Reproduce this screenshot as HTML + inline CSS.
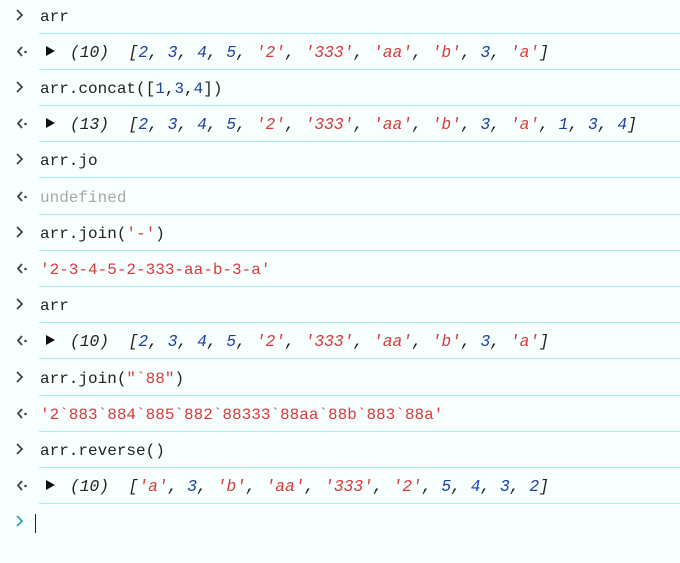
<!DOCTYPE html>
<html><head><meta charset="utf-8"><style>
html,body{margin:0;padding:0;background:#f8ffff;width:680px;height:563px;overflow:hidden}
.r{position:absolute;left:0;width:680px;height:36px}
.ln{position:absolute;left:39px;right:0;height:1px;background:#a6eef6}
.t{position:absolute;left:40px;top:2px;height:34px;font:16px "Liberation Mono","Noto Sans CJK SC",monospace;line-height:34px;color:#222;white-space:pre}
.i{font-style:italic;font-size:16.3px}
.n{color:#1c3fa8}.s{color:#d83a3a}.g{color:#a8a8a8}
.ic{position:absolute;left:13px;top:8px}
.tri{position:absolute;left:46px;top:12px;width:0;height:0;border-left:9px solid #111;border-top:5.5px solid transparent;border-bottom:5.5px solid transparent}
</style></head><body>
<div id="w"></div>
<script>
(function(){
var rows=[
['in','arr'],
['out','<span class="i">(10)  [<span class="n">2</span>, <span class="n">3</span>, <span class="n">4</span>, <span class="n">5</span>, <span class="s">\'2\'</span>, <span class="s">\'333\'</span>, <span class="s">\'aa\'</span>, <span class="s">\'b\'</span>, <span class="n">3</span>, <span class="s">\'a\'</span>]</span>',1],
['in','arr.concat([<span class="n">1</span>,<span class="n">3</span>,<span class="n">4</span>])'],
['out','<span class="i">(13)  [<span class="n">2</span>, <span class="n">3</span>, <span class="n">4</span>, <span class="n">5</span>, <span class="s">\'2\'</span>, <span class="s">\'333\'</span>, <span class="s">\'aa\'</span>, <span class="s">\'b\'</span>, <span class="n">3</span>, <span class="s">\'a\'</span>, <span class="n">1</span>, <span class="n">3</span>, <span class="n">4</span>]</span>',1],
['in','arr.jo'],
['out','<span class="g">undefined</span>'],
['in','arr.join(<span class="s">\'-\'</span>)'],
['out','<span class="s">\'2-3-4-5-2-333-aa-b-3-a\'</span>'],
['in','arr'],
['out','<span class="i">(10)  [<span class="n">2</span>, <span class="n">3</span>, <span class="n">4</span>, <span class="n">5</span>, <span class="s">\'2\'</span>, <span class="s">\'333\'</span>, <span class="s">\'aa\'</span>, <span class="s">\'b\'</span>, <span class="n">3</span>, <span class="s">\'a\'</span>]</span>',1],
['in','arr.join(<span class="s">"`88"</span>)'],
['out','<span class="s">\'2`883`884`885`882`88333`88aa`88b`883`88a\'</span>'],
['in','arr.reverse()'],
['out','<span class="i">(10)  [<span class="s">\'a\'</span>, <span class="n">3</span>, <span class="s">\'b\'</span>, <span class="s">\'aa\'</span>, <span class="s">\'333\'</span>, <span class="s">\'2\'</span>, <span class="n">5</span>, <span class="n">4</span>, <span class="n">3</span>, <span class="n">2</span>]</span>',1]
];
var h='';
rows.forEach(function(r,k){
 var y=Math.round(-2.5+36.2*k);
 var ic=r[0]=='in'
  ?'<svg class="ic" width="14" height="18" viewBox="0 0 14 18"><path d="M4 4 L9 9 L4 14" fill="none" stroke="#444" stroke-width="1.8"/></svg>'
  :'<svg class="ic" width="20" height="18" viewBox="0 0 20 18"><path d="M9 5 L5 9.5 L9 14" fill="none" stroke="#444" stroke-width="1.8"/><circle cx="12.5" cy="10" r="1.3" fill="#444"/></svg>';
 var left=r[2]?'70px':'40px';
 h+='<div class="r" style="top:'+y+'px">'+ic+(r[2]?'<div class="tri"></div>':'')+'<div class="t" style="left:'+left+'">'+r[1]+'</div><div class="ln" style="top:35px"></div></div>';
});
var y2=Math.round(-2.5+36.2*14);
h+='<div class="r" style="top:'+y2+'px"><svg class="ic" width="14" height="18" viewBox="0 0 14 18"><path d="M4 4 L9 9 L4 14" fill="none" stroke="#3aa0b0" stroke-width="1.8"/></svg><div style="position:absolute;left:35px;top:10px;width:1px;height:19px;background:#222"></div></div>';
document.getElementById('w').innerHTML=h;
})();
</script>
</body></html>
